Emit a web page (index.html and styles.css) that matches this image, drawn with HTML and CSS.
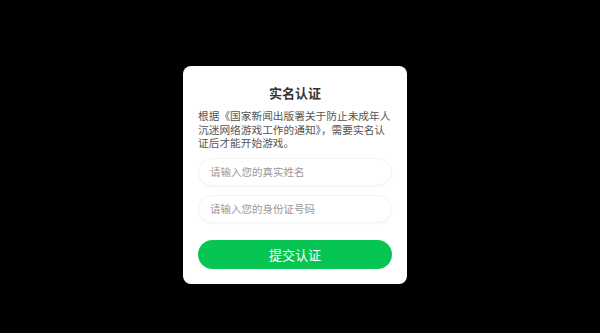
FILE: index.html
```html
<!DOCTYPE html>
<html lang="zh-CN">
<head>
    <meta charset="UTF-8">
    <meta name="viewport" content="width=device-width, initial-scale=1.0">
    <title>实名认证</title>
    <link rel="stylesheet" href="styles.css">
</head>
<body>
    <div class="dialog">
        <h2 class="title">实名认证</h2>
        <p class="desc">根据《国家新闻出版署关于防止未成年人沉迷网络游戏工作的通知》，需要实名认证后才能开始游戏。</p>
        <div class="form">
            <input type="text" class="field" placeholder="请输入您的真实姓名">
            <input type="text" class="field" placeholder="请输入您的身份证号码">
        </div>
        <button class="submit">提交认证</button>
    </div>
</body>
</html>
```

FILE: styles.css
```css
/* General styles */
html, body {
    height: 100%;
}
body {
    margin: 0;
    background-color: #000;
    font-family: "Noto Sans CJK SC", "Noto Sans", sans-serif;
    display: flex;
    justify-content: center;
    padding: 66px 10px 0 0;
    box-sizing: border-box;
}
.dialog {
    width: 224px;
    height: 218px;
    box-sizing: border-box;
    background-color: #fff;
    border-radius: 8px;
    padding: 18px 15px 15px;
}
.title {
    margin: 0;
    font-size: 13px;
    line-height: 18px;
    font-weight: bold;
    text-align: center;
    color: #333;
}
.desc {
    margin: 7px 0 0;
    font-size: 10.7px;
    line-height: 13.5px;
    color: #555;
}
.form {
    margin-top: 8px;
    display: flex;
    flex-direction: column;
    gap: 9px;
}
.field {
    height: 28px;
    box-sizing: border-box;
    border: 1px solid #f4f4f4;
    border-radius: 14px;
    padding: 0 11px;
    font-family: inherit;
    font-size: 10.5px;
    color: #333;
    outline: none;
    box-shadow: 0 1px 2px rgba(0, 0, 0, 0.03);
}
.field::placeholder {
    color: #999;
}
.submit {
    display: block;
    width: 100%;
    height: 29px;
    margin-top: 17px;
    border: none;
    border-radius: 15px;
    background-color: #07c553;
    color: #fff;
    font-family: inherit;
    font-size: 13px;
    cursor: pointer;
}
```
